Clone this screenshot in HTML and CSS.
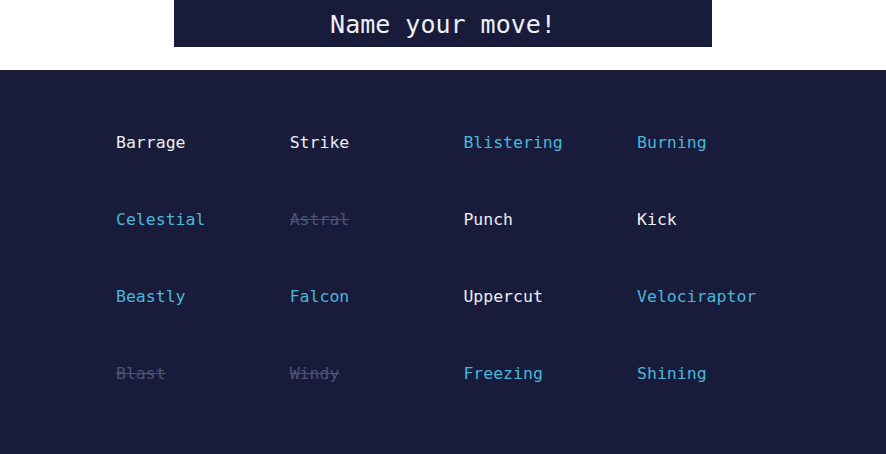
FILE: index.html
```html
<!DOCTYPE html>
<html>
<head>
<meta charset="utf-8">
<link rel="stylesheet" href="styles.css">
</head>
<body>
<header class="title-bar"><h1 class="title">Name your move!</h1></header>
<main class="board">
  <ul class="moves">
    <li class="move">Barrage</li>
    <li class="move">Strike</li>
    <li class="move hot">Blistering</li>
    <li class="move hot">Burning</li>
    <li class="move hot">Celestial</li>
    <li class="move used">Astral</li>
    <li class="move">Punch</li>
    <li class="move">Kick</li>
    <li class="move hot">Beastly</li>
    <li class="move hot">Falcon</li>
    <li class="move">Uppercut</li>
    <li class="move hot">Velociraptor</li>
    <li class="move used">Blast</li>
    <li class="move used">Windy</li>
    <li class="move hot">Freezing</li>
    <li class="move hot">Shining</li>
  </ul>
</main>
</body>
</html>
```
FILE: styles.css
```css
html, body {
  margin: 0;
  padding: 0;
  background: #ffffff;
}
body {
  font-family: "DejaVu Sans Mono", "Liberation Mono", monospace;
  width: 886px;
  height: 454px;
  overflow: hidden;
}
.title-bar {
  width: 538px;
  height: 47px;
  margin: 0 auto 23px;
  background: #181c3a;
  display: flex;
  align-items: center;
  justify-content: center;
}
.title {
  margin: 0;
  padding-top: 2px;
  font-size: 25px;
  font-weight: normal;
  color: #eef0f6;
  letter-spacing: 0;
  line-height: 1;
}
.board {
  background: #181c3a;
  height: 384px;
  box-sizing: border-box;
  padding: 63px 0 0 116px;
}
.moves {
  list-style: none;
  margin: 0;
  padding: 0;
  display: grid;
  grid-template-columns: repeat(4, 173.7px);
  grid-auto-rows: 77px;
}
.move {
  font-size: 16.5px;
  line-height: 20px;
  height: 20px;
  color: #eceef4;
}
.move.hot {
  color: #4ab6da;
}
.move.used {
  color: #4b5379;
  text-decoration: line-through;
}
```
